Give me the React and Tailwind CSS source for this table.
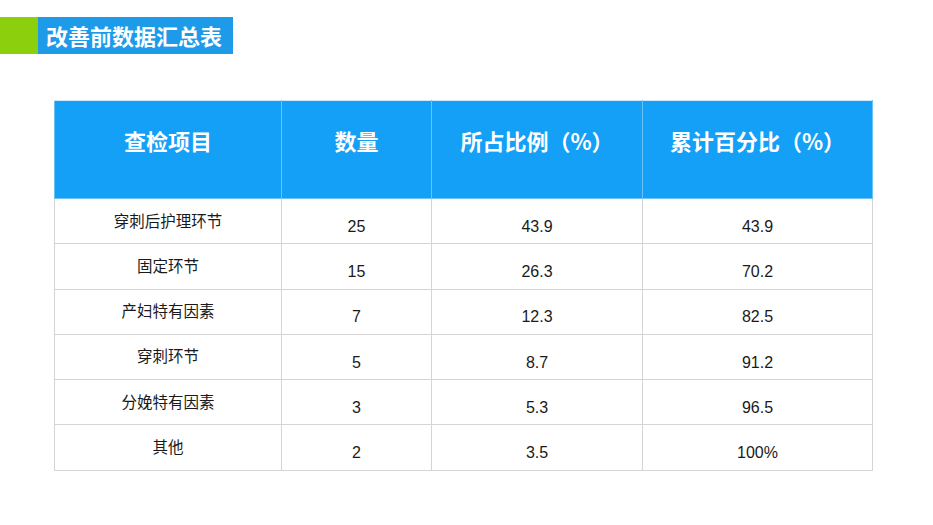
export default function App() {
  const rows = [
    ["穿刺后护理环节", "25", "43.9", "43.9"],
    ["固定环节", "15", "26.3", "70.2"],
    ["产妇特有因素", "7", "12.3", "82.5"],
    ["穿刺环节", "5", "8.7", "91.2"],
    ["分娩特有因素", "3", "5.3", "96.5"],
    ["其他", "2", "3.5", "100%"],
  ];
  const cjk = { fontFamily: '"Noto Sans CJK SC", "Liberation Sans", sans-serif' };
  const num = { fontFamily: '"Liberation Sans", "Noto Sans CJK SC", sans-serif' };
  return (
    <div className="w-[933px] h-[525px] bg-white relative overflow-hidden">
      <div className="flex pt-[17px] h-[54px]">
        <div className="w-[38px] h-[37px] bg-[#8ccf0c]" />
        <div
          className="h-[37px] w-[195px] bg-[#1d9be9] text-white font-bold text-[22px] leading-[37px] pl-[8px]"
          style={cjk}
        >
          改善前数据汇总表
        </div>
      </div>
      <div className="pl-[54px] pt-[46px]">
        <table className="border-collapse w-[818px] table-fixed">
          <colgroup>
            <col className="w-[227px]" />
            <col className="w-[150px]" />
            <col className="w-[211px]" />
            <col className="w-[230px]" />
          </colgroup>
          <thead>
            <tr className="h-[98px] bg-[#13a0f6] text-white">
              {["查检项目", "数量", "所占比例（%）", "累计百分比（%）"].map((h, i) => (
                <th
                  key={i}
                  className="border border-[#6cc2f4] border-t-[#cfe9f8] font-bold text-[22px] text-center align-middle pb-[18px]"
                  style={cjk}
                >
                  {h}
                </th>
              ))}
            </tr>
          </thead>
          <tbody>
            {rows.map((r, ri) => (
              <tr key={ri} className="h-[45.3px]">
                {r.map((c, ci) =>
                  ci === 0 ? (
                    <td
                      key={ci}
                      className="border border-[#d4d4d4] text-center text-[15.5px] text-[#1a1a1a] align-middle pb-[2px]"
                      style={cjk}
                    >
                      {c}
                    </td>
                  ) : (
                    <td
                      key={ci}
                      className="border border-[#d4d4d4] text-center text-[16px] text-[#1a1a1a] align-middle pt-[11px]"
                      style={num}
                    >
                      {c}
                    </td>
                  )
                )}
              </tr>
            ))}
          </tbody>
        </table>
      </div>
    </div>
  );
}
